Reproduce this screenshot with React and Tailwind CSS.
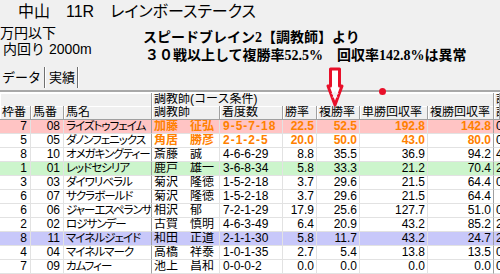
import React from 'react';

const rows = [
  { w: '7', u: '08', name: 'ライズトゥフェイム', tr: '加藤　征弘', rec: '9-5-7-18', win: '22.5', plc: '52.5', wr: '192.8', pr: '142.8', bg: 'bg-[#ffc4c4]', hot: true, x: '0' },
  { w: '5', u: '05', name: 'ダノンフェニックス', tr: '角居　勝彦', rec: '2-1-2-5', win: '20.0', plc: '50.0', wr: '43.0', pr: '80.0', bg: 'bg-white', hot: true, x: '0' },
  { w: '8', u: '10', name: 'オメガキングティー', tr: '斎藤　誠', rec: '4-6-6-29', win: '8.8', plc: '35.5', wr: '36.9', pr: '94.2', bg: 'bg-white', x: '4' },
  { w: '1', u: '01', name: 'レッドセシリア', tr: '鹿戸　雄一', rec: '3-6-8-34', win: '5.8', plc: '33.3', wr: '21.2', pr: '70.4', bg: 'bg-[#ccf5cc]', x: '2' },
  { w: '3', u: '03', name: 'ダイワリベラル', tr: '菊沢　隆徳', rec: '1-5-2-18', win: '3.7', plc: '29.6', wr: '21.5', pr: '64.4', bg: 'bg-white', x: '0' },
  { w: '6', u: '07', name: 'サクラボールド', tr: '菊沢　隆徳', rec: '1-5-2-18', win: '3.7', plc: '29.6', wr: '21.5', pr: '64.4', bg: 'bg-white', x: '' },
  { w: '6', u: '06', name: 'ジャーエスペランサ', tr: '相沢　郁', rec: '7-2-1-29', win: '17.9', plc: '25.6', wr: '127.7', pr: '51.0', bg: 'bg-white', x: '0' },
  { w: '2', u: '02', name: 'ロジサンデー', tr: '古賀　慎明', rec: '4-6-3-49', win: '6.4', plc: '20.9', wr: '43.2', pr: '85.2', bg: 'bg-white', x: '2' },
  { w: '8', u: '11', name: 'マイネルジェイド', tr: '和田　正道', rec: '2-1-1-30', win: '5.8', plc: '11.7', wr: '43.2', pr: '24.7', bg: 'bg-[#c8c8fa]', x: '2' },
  { w: '4', u: '04', name: 'マイネルマーク', tr: '高橋　祥泰', rec: '1-0-1-35', win: '2.7', plc: '5.4', wr: '13.8', pr: '13.5', bg: 'bg-white', x: '0' },
  { w: '7', u: '09', name: 'カムフィー', tr: '池上　昌和', rec: '0-0-0-2', win: '0.0', plc: '0.0', wr: '0.0', pr: '0.0', bg: 'bg-white', x: '0' },
];

const cell = 'h-[14px] shrink-0 overflow-hidden whitespace-nowrap border-r border-b border-[#e2e2e2] leading-[13px]';
const head = 'h-[14px] shrink-0 overflow-hidden whitespace-nowrap border-r border-b border-r-[#a0a0a0] border-b-[#a0a0a0] leading-[13px] pl-[2px] shadow-[inset_1px_1px_0_#ffffff]';

function Row({ r }) {
  const hot = r.hot ? 'font-bold text-[#ff8000]' : 'text-black';
  return (
    <div className={`flex ${r.bg}`}>
      <div className={`${cell} w-[31px] text-right pr-[3px]`}>{r.w}</div>
      <div className={`${cell} w-[33px] text-right pr-[3px]`}>{r.u}</div>
      <div className={`${cell} w-[88px] pl-[2px] text-[11.5px] tracking-[-1px] border-r-[#a0a0a0] [font-feature-settings:'palt']`}>{r.name}</div>
      <div className={`${cell} w-[68px] pl-[2px] ${hot}`}>{r.tr}</div>
      <div className={`${cell} w-[63px] pl-[3px] ${hot} ${r.hot ? 'tracking-[1px]' : ''}`}>{r.rec}</div>
      <div className={`${cell} w-[34px] text-right pr-[2px] ${hot}`}>{r.win}</div>
      <div className={`${cell} w-[43px] text-right pr-[2px] ${hot}`}>{r.plc}</div>
      <div className={`${cell} w-[68px] text-right pr-[2px] ${hot}`}>{r.wr}</div>
      <div className={`${cell} w-[66px] text-right pr-[2px] border-r-[#a0a0a0] ${hot}`}>{r.pr}</div>
      <div className={`${cell} flex-1 pl-[2px] border-r-0`}>{r.x}</div>
    </div>
  );
}

export default function App() {
  return (
    <div className="relative w-[500px] h-[274px] overflow-hidden bg-[#f0f0f0] text-black font-['Liberation_Sans','Noto_Sans_CJK_JP',sans-serif]">
      {/* race title */}
      <div className="h-[24px] pl-[18px] pt-[2px] text-[16px] leading-[20px] whitespace-nowrap [font-feature-settings:'palt']">
        中山　11R　レインボーステークス
      </div>

      {/* race info + comment */}
      <div className="flex h-[40px]">
        <div className="w-[143px] shrink-0 text-[14px] leading-[16px] pt-[1px]">
          <div>万円以下</div>
          <div className="pl-[3px]">内回り 2000m</div>
        </div>
        <div className="pt-[5px] text-[14px] leading-[18px] font-bold whitespace-nowrap font-['Liberation_Serif','Noto_Sans_CJK_JP',serif]">
          <div>スピードブレイン2【調教師】より</div>
          <div className="pl-[2px]">３０戦以上して複勝率52.5%　回収率142.8%は異常</div>
        </div>
      </div>

      {/* tabs */}
      <div className="flex h-[26px] items-start pt-[3px] text-[13px]">
        <div className="h-[21px] pl-[2px] pr-[3px] pt-[3px] leading-[15px]">データ</div>
        <div className="w-[2px] h-[21px] border-l border-l-[#707070] border-r border-r-white" />
        <div className="h-[21px] pl-[3px] pr-[2px] pt-[3px] leading-[15px]">実績</div>
        <div className="w-[2px] h-[21px] border-l border-l-[#707070] border-r border-r-white" />
      </div>

      {/* slider line */}
      <div className="h-[3px] border-t-2 border-t-[#a8a8a8] border-b border-b-white" />

      {/* grid */}
      <div className="text-[12px]">
        <div className="flex h-[13px] text-[12px]">
          <div className={`${head} h-[13px] w-[152px]`} />
          <div className={`${head} h-[13px] w-[342px] pl-[1px]`}>調教師(コース条件)</div>
          <div className={`${head} h-[13px] flex-1`}>調</div>
        </div>
        <div className="flex">
          <div className={`${head} w-[31px] pl-0`}>枠番</div>
          <div className={`${head} w-[33px]`}>馬番</div>
          <div className={`${head} w-[88px]`}>馬名</div>
          <div className={`${head} w-[68px] pl-[1px]`}>調教師</div>
          <div className={`${head} w-[63px]`}>着度数</div>
          <div className={`${head} w-[34px]`}>勝率</div>
          <div className={`${head} w-[43px]`}>複勝率</div>
          <div className={`${head} w-[68px]`}>単勝回収率</div>
          <div className={`${head} w-[66px]`}>複勝回収率</div>
          <div className={`${head} flex-1`}>調</div>
        </div>
        {rows.map((r, i) => (
          <Row key={i} r={r} />
        ))}
      </div>

      {/* red marker dot on slider */}
      <div className="absolute left-[379px] top-[88px] w-[7px] h-[7px] rounded-full bg-[#e8102a]" />

      {/* red arrow pointing at 複勝率 */}
      <svg className="absolute left-[324px] top-[66px]" width="22" height="42" viewBox="0 0 22 42">
        <path
          d="M6.5 3 H15.5 V20 H18 L11 39 L4 20 H6.5 Z"
          fill="#ffffff"
          stroke="#e8102a"
          strokeWidth="3"
          strokeLinejoin="round"
        />
        <path d="M11 24 L12.2 27 L15 27.3 L12.8 29 L13.5 32 L11 30.4 L8.5 32 L9.2 29 L7 27.3 L9.8 27 Z" fill="#f0f0f0" />
      </svg>
    </div>
  );
}
